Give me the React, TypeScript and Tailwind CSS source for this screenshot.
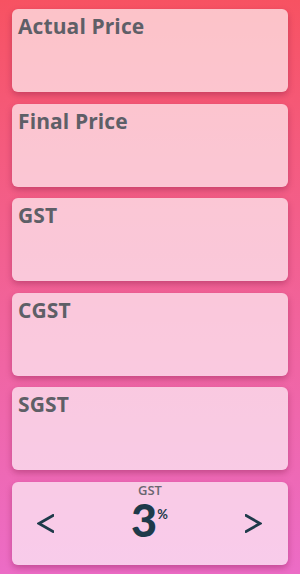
import React from 'react';

const fields = ['Actual Price', 'Final Price', 'GST', 'CGST', 'SGST'];

function FieldCard({ label }: { label: string }) {
  return (
    <div className="h-[83px] rounded-[6px] bg-white/65 px-[6px] pt-[2px] shadow-[0_3px_6px_rgba(120,20,60,0.35)]">
      <p className="text-[21px] font-bold leading-[30px] tracking-[0.1px] text-[#5e5f67]">{label}</p>
    </div>
  );
}

function Chevron({ dir }: { dir: 'left' | 'right' }) {
  const pts = dir === 'left' ? '16,1.5 2,9.5 16,17.5' : '1,1.5 15,9.5 1,17.5';
  return (
    <svg width="17" height="19" viewBox="0 0 17 19" fill="none" className="mt-[7px]">
      <polyline points={pts} stroke="#1e3a4a" strokeWidth="2.8" strokeLinecap="square" strokeLinejoin="miter" />
    </svg>
  );
}

export default function App() {
  return (
    <div
      className="flex h-[574px] w-[300px] flex-col gap-[11.5px] bg-linear-to-b from-[#f75262] to-[#ec6cc6] px-[12px] pt-[9px]"
      style={{ fontFamily: '"Open Sans", "Noto Sans", sans-serif' }}
    >
      {fields.map((f) => (
        <FieldCard key={f} label={f} />
      ))}

      <div className="flex h-[83px] flex-col items-center rounded-[6px] bg-white/65 shadow-[0_3px_6px_rgba(120,20,60,0.35)]">
        <p className="text-[13px] font-semibold leading-[16px] text-[#6a6570]">GST</p>
        <div className="mt-[3px] flex w-full items-center justify-between pl-[25px] pr-[26px]">
          <Chevron dir="left" />
          <div className="flex items-start" style={{ fontFamily: 'Lato, sans-serif' }}>
            <span className="text-[45px] font-black leading-[38px] text-[#1e3a4a]">3</span>
            <span className="mt-[6px] text-[13px] font-bold leading-[14px] text-[#1e3a4a]">%</span>
          </div>
          <Chevron dir="right" />
        </div>
      </div>
    </div>
  );
}
